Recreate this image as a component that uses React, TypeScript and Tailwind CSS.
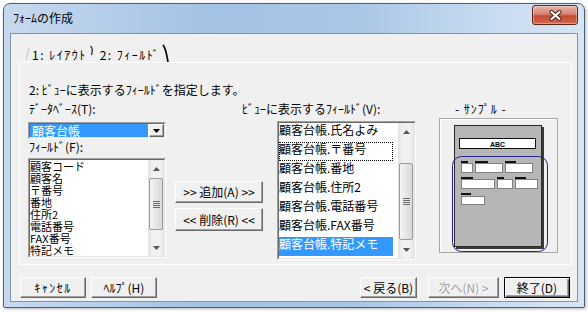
import React from 'react';

const raised =
  'border border-t-white border-l-white border-r-[#696969] border-b-[#696969] shadow-[inset_-1px_-1px_0_#a0a0a0] bg-[#f0f0f0]';

const Tri = ({ down }: { down?: boolean }) => (
  <svg width="7" height="4" viewBox="0 0 7 4">
    <path d={down ? 'M0 0H7L3.5 4Z' : 'M0 4H7L3.5 0Z'} fill="#555" />
  </svg>
);

const ScrollBar = ({ thumb }: { thumb: string }) => (
  <div className="w-[16px] shrink-0 h-full flex flex-col bg-[linear-gradient(90deg,#e2e2e2,#f1f1f1_30%,#f1f1f1_70%,#e6e6e6)]">
    <div className="h-[17px] shrink-0 flex items-center justify-center">
      <Tri />
    </div>
    <div className="flex-1">
      <div
        className={`mx-[1px] rounded-[2px] border border-[#9b9b9b] bg-[linear-gradient(90deg,#f4f4f4,#d9d9d9)] flex items-center justify-center ${thumb}`}
      >
        <svg width="7" height="7" viewBox="0 0 7 7">
          <path d="M0 0.5H7M0 2.5H7M0 4.5H7M0 6.5H7" stroke="#6b6b6b" strokeWidth="1" />
        </svg>
      </div>
    </div>
    <div className="h-[17px] shrink-0 flex items-center justify-center">
      <Tri down />
    </div>
  </div>
);

// sunken well used by the combo and the two lists
const Sunken = ({ className, children }: { className: string; children: React.ReactNode }) => (
  <div className={`border border-t-[#a0a0a0] border-l-[#a0a0a0] border-r-white border-b-white ${className}`}>
    <div className="h-full border border-t-[#696969] border-l-[#696969] border-r-[#e3e3e3] border-b-[#e3e3e3] bg-white flex">
      {children}
    </div>
  </div>
);

const leftFields = ['顧客コード', '顧客名', '〒番号', '番地', '住所2', '電話番号', 'FAX番号', '特記メモ'];
const viewFields = [
  '顧客台帳.氏名よみ',
  '顧客台帳.〒番号',
  '顧客台帳.番地',
  '顧客台帳.住所2',
  '顧客台帳.電話番号',
  '顧客台帳.FAX番号',
  '顧客台帳.特記メモ',
];

const SamplePreview = () => (
  <svg width="117" height="133" viewBox="0 0 117 133">
    <rect x="16" y="8" width="88" height="122" fill="#3a3a3a" />
    <rect x="14.5" y="6.5" width="87" height="121" fill="#b6b6b6" stroke="#2a2a2a" />
    <rect x="19.5" y="19.5" width="76" height="10" fill="#fff" stroke="#111" />
    <text x="57.5" y="27.5" textAnchor="middle" fontSize="7" fontWeight="bold" fontFamily="Liberation Sans, sans-serif">
      ABC
    </text>
    <rect x="12.5" y="37.5" width="95" height="95" rx="9" fill="none" stroke="#24248c" />
    {/* labels */}
    <g fill="#111">
      <rect x="21" y="42" width="7" height="2" />
      <rect x="35" y="42" width="13" height="2" />
      <rect x="65" y="42" width="11" height="2" />
      <rect x="21" y="58" width="12" height="2" />
      <rect x="57" y="58" width="7" height="2" />
      <rect x="75" y="58" width="11" height="2" />
      <rect x="21" y="74" width="10" height="2" />
    </g>
    {/* boxes */}
    <g fill="#fff" stroke="#808080">
      <rect x="21.5" y="44.5" width="11" height="9" />
      <rect x="35.5" y="44.5" width="27" height="9" />
      <rect x="65.5" y="44.5" width="27" height="9" />
      <rect x="21.5" y="60.5" width="33" height="9" />
      <rect x="57.5" y="60.5" width="15" height="9" />
      <rect x="75.5" y="60.5" width="22" height="9" />
      <rect x="21.5" y="77.5" width="23" height="8" />
    </g>
  </svg>
);

export default function App() {
  return (
    <div className="w-[588px] h-[312px] bg-white pt-[3px] pl-[3px] font-['Noto_Sans_CJK_JP',sans-serif] text-black text-[12px] leading-[14px]">
      <div className="w-[582px] h-[305px] flex flex-col px-[6px] pb-[5px] rounded-t-[7px] rounded-b-[2px] border border-[#4f5f73] bg-[linear-gradient(90deg,#c6d9ee_0%,#a4c2e4_35%,#a9c6e6_60%,#c9dcf0_85%,#d6e5f4_100%)] shadow-[1px_1px_3px_rgba(0,0,0,0.3)]">
        {/* title bar */}
        <div className="h-[29px] shrink-0 flex items-start justify-between">
          <span className="mt-[7px] pl-[3px]">ﾌｫｰﾑの作成</span>
          <div className="mt-[1px] w-[46px] h-[20px] rounded-[3px] border border-[#5e241b] bg-[linear-gradient(180deg,#eab3a6_0%,#d98373_45%,#c44a33_55%,#d06a50_100%)] shadow-[inset_0_0_0_1px_rgba(255,255,255,0.35)] flex items-center justify-center">
            <svg width="13" height="11" viewBox="0 0 13 11">
              <path d="M2.5 2L10.5 9M10.5 2L2.5 9" stroke="#4a1d16" strokeWidth="4" strokeLinecap="round" />
              <path d="M2.5 2L10.5 9M10.5 2L2.5 9" stroke="#fff" strokeWidth="2.2" strokeLinecap="round" />
            </svg>
          </div>
        </div>

        {/* client */}
        <div className="flex-1 border border-[#7f93aa] bg-[#f0f0f0] flex flex-col">
          {/* tabs */}
          <div className="h-[28px] shrink-0 flex items-end pl-[14px]">
            <svg width="6" height="14" viewBox="0 0 6 14" className="mb-[1px]">
              <path d="M1 13L4 1" stroke="#c4c4c4" strokeWidth="1" />
            </svg>
            <span className="ml-[1px] tracking-[1.5px]">1: ﾚｲｱｳﾄ</span>
            <svg width="6" height="14" viewBox="0 0 6 14" className="ml-[2px] mb-[3px]">
              <path d="M1.5 1Q4.5 4 2.5 10" stroke="#333" strokeWidth="1.3" fill="none" />
            </svg>
            <span className="ml-[5px] tracking-[1.5px]">2: ﾌｨｰﾙﾄﾞ</span>
            <svg width="8" height="18" viewBox="0 0 8 18" className="ml-[2px]">
              <path d="M1 1Q3.5 3 6 18" stroke="#111" strokeWidth="1.8" fill="none" />
            </svg>
          </div>

          {/* tab page */}
          <div className="ml-[8px] mr-[5px] h-[203px] shrink-0 border border-white flex flex-col">
            <div className="mt-[20px] pl-[9px] h-[14px]">2: ﾋﾞｭｰに表示するﾌｨｰﾙﾄﾞを指定します。</div>

            <div className="mt-[5px] flex items-start">
              {/* source column */}
              <div className="ml-[8px] w-[138px] flex flex-col">
                <div className="h-[14px] pl-[1px]">ﾃﾞｰﾀﾍﾞｰｽ(T):</div>
                <Sunken className="mt-[6px] h-[17px]">
                  <div className="flex-1 flex items-center">
                    <div className="w-[118px] h-full bg-[#3399ff] text-white flex items-center pl-[2px] leading-[13px]">
                      顧客台帳
                    </div>
                  </div>
                  <div className={`w-[15px] h-full flex items-center justify-center ${raised}`}>
                    <svg width="7" height="4" viewBox="0 0 7 4">
                      <path d="M0 0H7L3.5 4Z" fill="#000" />
                    </svg>
                  </div>
                </Sunken>
                <div className="mt-[1px] h-[14px] pl-[1px]">ﾌｨｰﾙﾄﾞ(F):</div>
                <Sunken className="mt-[4px] h-[100px]">
                  <div className="flex-1 text-[11px] leading-[12px]">
                    {leftFields.map((f) => (
                      <div key={f} className="h-[12px] whitespace-nowrap">
                        {f}
                      </div>
                    ))}
                  </div>
                  <ScrollBar thumb="mt-[1px] h-[52px]" />
                </Sunken>
              </div>

              {/* buttons + view list */}
              <div className="ml-[9px] w-[241px] flex flex-col">
                <div className="h-[14px] pl-[67px] whitespace-nowrap">ﾋﾞｭｰに表示するﾌｨｰﾙﾄﾞ(V):</div>
                <div className="mt-[5px] flex">
                  <div className="w-[88px] mt-[60px] flex flex-col">
                    <div className={`h-[22px] flex items-center justify-center ${raised}`}>&gt;&gt; 追加(A) &gt;&gt;</div>
                    <div className={`mt-[5px] h-[23px] flex items-center justify-center ${raised}`}>&lt;&lt; 削除(R) &lt;&lt;</div>
                  </div>
                  <Sunken className="ml-[14px] w-[139px] h-[139px]">
                    <div className="flex-1">
                      {viewFields.map((f, i) => (
                        <div
                          key={f}
                          className={
                            i === 6
                              ? 'w-[114px] h-[19px] bg-[#3399ff] text-white whitespace-nowrap'
                              : i === 1
                              ? 'w-[114px] h-[19px] border border-dotted border-black whitespace-nowrap'
                              : 'w-[114px] h-[19px] whitespace-nowrap'
                          }
                        >
                          <span className={i === 1 ? 'block -mt-[1px] -ml-[1px]' : 'block'}>{f}</span>
                        </div>
                      ))}
                    </div>
                    <ScrollBar thumb="mt-[23px] h-[77px]" />
                  </Sunken>
                </div>
              </div>

              {/* sample */}
              <div className="ml-[23px] w-[119px] flex flex-col">
                <div className="h-[14px] pl-[16px] tracking-[1px] whitespace-nowrap">- ｻﾝﾌﾟﾙ -</div>
                <div className="mt-[2px] h-[135px] border border-[#a7a7a7] shadow-[inset_1px_1px_0_#fff]">
                  <SamplePreview />
                </div>
              </div>
            </div>
          </div>

          {/* wizard buttons */}
          <div className="mt-[12px] h-[21px] shrink-0 flex pl-[9px] pr-[7px]">
            <div className={`w-[66px] flex items-center justify-center tracking-[1.5px] ${raised}`}>ｷｬﾝｾﾙ</div>
            <div className={`ml-[5px] w-[66px] flex items-center justify-center ${raised}`}>ﾍﾙﾌﾟ(H)</div>
            <div className="flex-1" />
            <div className={`w-[57px] flex items-center justify-center ${raised}`}>&lt; 戻る(B)</div>
            <div className={`ml-[11px] w-[71px] flex items-center justify-center text-[#a0a0a0] [text-shadow:1px_1px_0_#fff] ${raised}`}>
              次へ(N) &gt;
            </div>
            <div className="ml-[5px] w-[66px] border border-black bg-[#f0f0f0] shadow-[inset_1px_1px_0_#fff,inset_-1px_-1px_0_#696969,inset_-2px_-2px_0_#a0a0a0] flex items-center justify-center">
              終了(D)
            </div>
          </div>
        </div>
      </div>
    </div>
  );
}
